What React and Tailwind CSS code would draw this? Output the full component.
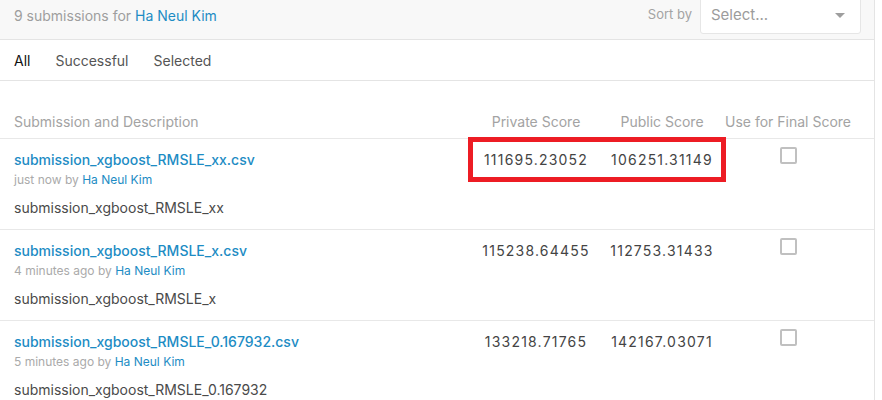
import React from "react";

const rows = [
  {
    file: "submission_xgboost_RMSLE_xx.csv",
    when: "just now",
    desc: "submission_xgboost_RMSLE_xx",
    priv: "111695.23052",
    pub: "106251.31149",
  },
  {
    file: "submission_xgboost_RMSLE_x.csv",
    when: "4 minutes ago",
    desc: "submission_xgboost_RMSLE_x",
    priv: "115238.64455",
    pub: "112753.31433",
  },
  {
    file: "submission_xgboost_RMSLE_0.167932.csv",
    when: "5 minutes ago",
    desc: "submission_xgboost_RMSLE_0.167932",
    priv: "133218.71765",
    pub: "142167.03071",
  },
];

const grid = "grid grid-cols-[459px_126px_126px_126px] pl-[14px] pr-[23px]";

export default function App() {
  return (
    <div className="relative h-[400px] w-[882px] overflow-hidden bg-white font-['Inter',sans-serif]">
      <div className="w-[875px] border-r border-[#e4e4e4] min-h-[400px]">
        {/* top bar */}
        <div className="h-[40px] overflow-hidden border-b border-[#e4e4e4] bg-[#f8f8f8]">
          <div className="-mt-[4px] flex h-[38px] items-center pl-[14px] pr-[13px]">
            <div className="text-[14px] text-[#9e9e9e]">
              9 submissions for{" "}
              <span className="text-[#1d8cc4]">Ha Neul Kim</span>
            </div>
            <div className="ml-auto flex items-center">
              <span className="mr-[8px] text-[13px] text-[#a3a3a3]">Sort by</span>
              <div className="flex h-[38px] w-[161px] items-center rounded-[3px] border border-[#e6e6e6] bg-white pl-[10px] pr-[15px]">
                <span className="text-[15px] text-[#9c9c9c]">Select...</span>
                <span className="ml-auto h-0 w-0 border-x-[5px] border-t-[5px] border-x-transparent border-t-[#9e9e9e]" />
              </div>
            </div>
          </div>
        </div>

        {/* tabs */}
        <div className="flex h-[41px] items-center gap-[25px] border-b border-[#e4e4e4] pl-[14px] text-[14px]">
          <span className="text-[#111]">All</span>
          <span className="text-[#555]">Successful</span>
          <span className="text-[#555]">Selected</span>
        </div>

        {/* column header */}
        <div className={`${grid} h-[58px] items-end border-b border-[#e8e8e8] pb-[6px] text-[14px] leading-[20px] text-[#a3a3a3]`}>
          <span>Submission and Description</span>
          <span className="text-center">Private Score</span>
          <span className="text-center">Public Score</span>
          <span className="text-center whitespace-nowrap">Use for Final Score</span>
        </div>

        {rows.map((r) => (
          <div
            key={r.file}
            className={`${grid} h-[91px] items-start border-b border-[#e8e8e8] pt-[11px]`}
          >
            <div>
              <div className="text-[14px] font-medium leading-[20px] text-[#1d8cc4]">{r.file}</div>
              <div className="mt-[1px] text-[12px] leading-[18px] text-[#aaa]">
                {r.when} by <span className="text-[#1d8cc4]">Ha Neul Kim</span>
              </div>
              <div className="mt-[9px] text-[14px] leading-[20px] text-[#4a4a4a]">{r.desc}</div>
            </div>
            <div className="text-center text-[14px] leading-[20px] tracking-[1.2px] text-[#444]">{r.priv}</div>
            <div className="text-center text-[14px] leading-[20px] tracking-[1.2px] text-[#444]">{r.pub}</div>
            <div className="flex justify-center">
              <span className="-mt-[3px] block h-[17px] w-[17px] rounded-[2px] border-2 border-[#c0c0c0] bg-white" />
            </div>
          </div>
        ))}
      </div>

      {/* highlight annotation */}
      <div className="absolute left-[468px] top-[137px] h-[45px] w-[258px] border-[5px] border-[#ed1c24]" />
    </div>
  );
}
